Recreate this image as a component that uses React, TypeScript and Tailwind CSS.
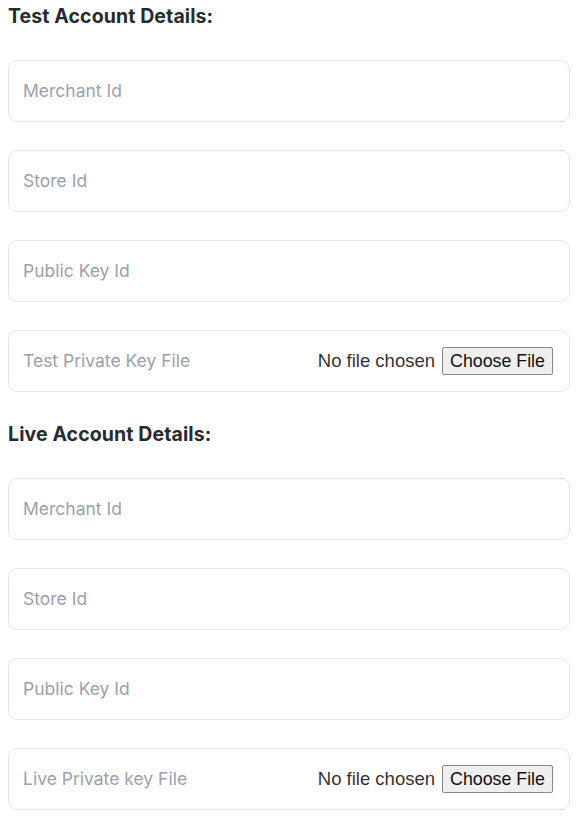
import React from "react";

function Field({ label }: { label: string }) {
  return (
    <div className="h-[62px] rounded-[9px] border border-[#e3e5e8] bg-white flex items-center pl-[14px] pr-[16px]">
      <span className="text-[17.5px] text-[#9aa1aa]">{label}</span>
    </div>
  );
}

function FileField({ label }: { label: string }) {
  return (
    <div className="h-[62px] rounded-[9px] border border-[#e3e5e8] bg-white flex items-center pl-[14px] pr-[16px]">
      <span className="text-[17.5px] text-[#9aa1aa] flex-1">{label}</span>
      <span
        className="text-[18.5px] text-[#333] mr-[7px]"
        style={{ fontFamily: '"Liberation Sans", Arial, sans-serif' }}
      >
        No file chosen
      </span>
      <span
        className="h-[28px] w-[111px] justify-center flex items-center border border-[#8a8a8a] rounded-[2px] bg-[#efefef] text-[17.8px] text-[#111]"
        style={{ fontFamily: '"Liberation Sans", Arial, sans-serif' }}
      >
        Choose File
      </span>
    </div>
  );
}

function Heading({ children }: { children: React.ReactNode }) {
  return (
    <h2 className="h-[30px] flex items-center text-[19.5px] font-bold text-[#272b30] tracking-[0.1px]">
      {children}
    </h2>
  );
}

export default function App() {
  return (
    <div
      className="w-[580px] bg-white pt-[2px] pl-[8px] pr-[10px] pb-[10px]"
      style={{ fontFamily: 'Inter, "Noto Sans", sans-serif' }}
    >
      <div className="flex flex-col gap-[28px]">
        <Heading>Test Account Details:</Heading>
        <Field label="Merchant Id" />
        <Field label="Store Id" />
        <Field label="Public Key Id" />
        <FileField label="Test Private Key File" />
        <Heading>Live Account Details:</Heading>
        <Field label="Merchant Id" />
        <Field label="Store Id" />
        <Field label="Public Key Id" />
        <FileField label="Live Private key File" />
      </div>
    </div>
  );
}
